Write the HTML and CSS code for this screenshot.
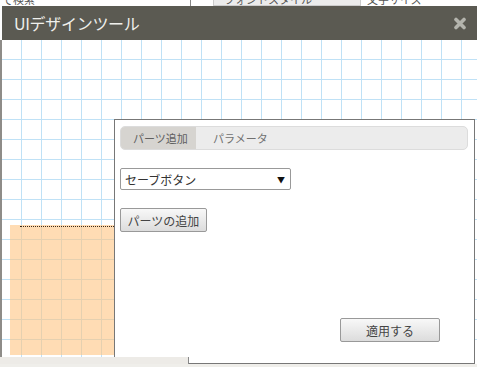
FILE: index.html
```html
<!DOCTYPE html>
<html lang="ja">
<head>
  <meta charset="UTF-8" />
  <meta name="viewport" content="width=device-width, initial-scale=1.0"/>
  <title>UIデザインツール</title>
  <link rel="stylesheet" href="styles.css">
</head>
<body>

  <!-- page behind the dialog -->
  <div class="backpage">
    <span class="back-search">で検索</span>
    <span class="back-col">
      <span class="back-field">フォントスタイル</span>
      <span class="back-label">文字サイズ</span>
    </span>
  </div>

  <div class="tool-window">
    <div class="titlebar">
      <span class="title">UIデザインツール</span>
      <svg class="close" width="14" height="13" viewBox="0 0 14 13">
        <path d="M3 2.5 L11 10.5 M11 2.5 L3 10.5" stroke="#b4b4ad" stroke-width="3.6" stroke-linecap="round"/>
      </svg>
    </div>
    <div class="canvas">
      <div class="part-box"></div>
    </div>
  </div>

  <div class="panel">
    <div class="tabs">
      <span class="tab active">パーツ追加</span>
      <span class="tab">パラメータ</span>
    </div>
    <div class="select">
      <span>セーブボタン</span>
      <span class="arrow">▼</span>
    </div>
    <button class="btn add-btn">パーツの追加</button>
    <div class="panel-foot">
      <button class="btn apply-btn">適用する</button>
    </div>
  </div>

  <div class="bottom-strip"></div>
  <div class="bottom-page"></div>

</body>
</html>
```

FILE: styles.css
```css
body {
  margin: 0;
  width: 477px;
  height: 367px;
  overflow: hidden;
  position: relative;
  background: #fff;
  font-family: "Noto Sans CJK JP", "Noto Sans", sans-serif;
  color: #333;
}

.backpage {
  position: absolute;
  top: -8px;
  left: 0;
  right: 0;
  height: 14px;
  font-size: 11px;
  color: #555;
  display: flex;
}

.back-search {
  width: 188px;
  padding-left: 2px;
  line-height: 14px;
}

.back-col {
  border-left: 1px solid #888;
  display: flex;
  padding-left: 22px;
}

.back-field {
  width: 148px;
  padding-left: 10px;
  background: #ececec;
  border: 1px solid #ccc;
  line-height: 12px;
  box-sizing: border-box;
}

.back-label {
  padding-left: 6px;
  line-height: 14px;
}

.tool-window {
  position: absolute;
  top: 6px;
  left: 0;
  right: -20px;
  bottom: 0;
}

.titlebar {
  margin-left: 2px;
  height: 34px;
  background: #5b5a52;
  display: flex;
  align-items: center;
  justify-content: space-between;
  padding: 0 30px 0 12px;
}

.title {
  color: #f0f0ec;
  font-size: 16px;
  letter-spacing: -0.3px;
}

.canvas {
  position: relative;
  height: 318px;
  border-left: 2px solid #8e8c88;
  background-color: #fff;
  background-image:
    linear-gradient(to right, transparent 19px, #bfe1f6 19px, #bfe1f6 20px, transparent 20px),
    linear-gradient(to bottom, transparent 19px, #bfe1f6 19px, #bfe1f6 20px, transparent 20px);
  background-size: 20px 20px;
}

.part-box {
  position: absolute;
  left: 8px;
  top: 185px;
  width: 120px;
  height: 130px;
  background: rgba(255, 196, 130, 0.6);
}

.part-box::before {
  content: "";
  position: absolute;
  left: 10px;
  right: 0;
  top: 1px;
  border-top: 1px dotted #3a2a1a;
}

.panel {
  position: absolute;
  left: 114px;
  top: 119px;
  width: 361px;
  height: 245px;
  box-sizing: border-box;
  background: #fff;
  border: 1px solid #777;
  padding: 6px 6px 0 5px;
  display: flex;
  flex-direction: column;
  align-items: flex-start;
}

.tabs {
  align-self: stretch;
  height: 24px;
  box-sizing: border-box;
  background: #ececec;
  border: 1px solid #dcdcdc;
  border-radius: 5px;
  display: flex;
  overflow: hidden;
}

.tab {
  flex: none;
  box-sizing: border-box;
  width: 75px;
  font-size: 11px;
  color: #707070;
  line-height: 22px;
  padding-left: 17px;
  white-space: nowrap;
}

.tab.active {
  background: #d6d4d0;
  color: #606060;
  padding-left: 12px;
}

.select {
  margin-top: 18px;
  width: 171px;
  height: 22px;
  box-sizing: border-box;
  border: 1px solid #999;
  border-radius: 2px;
  display: flex;
  justify-content: space-between;
  align-items: center;
  padding: 0 5px 0 4px;
  font-size: 12px;
  color: #333;
}

.select .arrow {
  font-size: 8px;
  color: #111;
}

.btn {
  font-family: inherit;
  font-size: 12px;
  color: #444;
  background: linear-gradient(#f8f8f8, #dcdcdc);
  border: 1px solid #999;
  border-radius: 2px;
  height: 24px;
  padding: 0;
}

.add-btn {
  margin-top: 18px;
  width: 87px;
}

.panel-foot {
  margin-top: auto;
  margin-bottom: 21px;
  align-self: stretch;
  display: flex;
  justify-content: flex-end;
  padding-right: 28px;
}

.apply-btn {
  width: 100px;
}

.bottom-strip {
  position: absolute;
  left: 0;
  top: 357px;
  width: 188px;
  height: 7px;
  background: #edebe7;
  border-right: 1px solid #888;
}

.bottom-page {
  position: absolute;
  left: 0;
  right: 0;
  top: 364px;
  height: 3px;
  background: #efeeea;
}
```
